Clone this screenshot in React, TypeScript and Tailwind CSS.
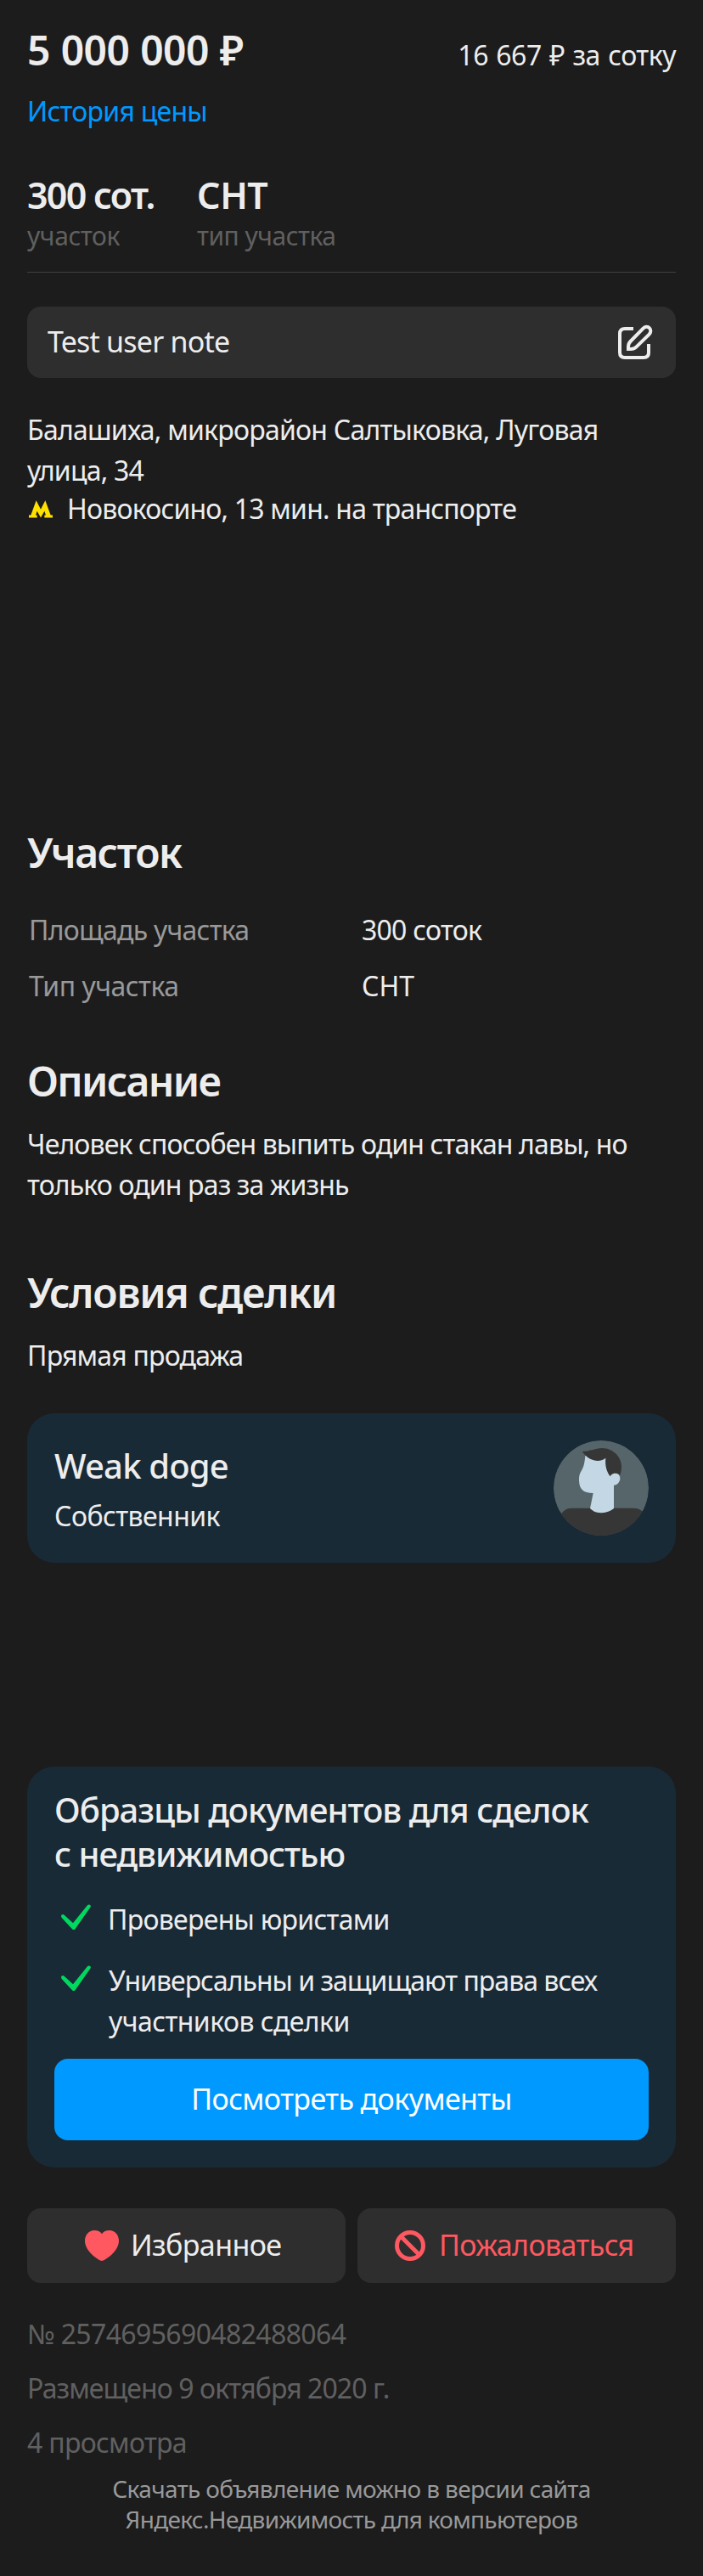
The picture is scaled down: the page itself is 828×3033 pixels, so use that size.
import React from "react";

function EditIcon() {
  return (
    <svg className="h-[42px] w-[42px]" viewBox="-1 -1 42 42" fill="none" stroke="#ededed" strokeWidth="4">
      <path d="M18 4H8C4 4 2 6 2 10V32C2 36 4 38 8 38H30C34 38 36 36 36 32V22" />
      <path d="M12 28V25.5C12 22.5 12.6 21 14.5 19L29.3 3.8C31.8 1.2 34.8 1.2 36.8 3.2C38.9 5.3 38.9 8.3 36.4 10.8L21.3 25.6C19.4 27.5 18 28 15 28Z" />
    </svg>
  );
}

function MetroIcon() {
  return (
    <svg className="h-[21px] w-[28px]" viewBox="42 28 84 62" fill="#ffe100">
      <path d="M68 28L84 60L100 28L119 80H126V89H97V80H102L97 66L84 89L71 66L66 80H71V89H42V80H49Z" />
    </svg>
  );
}

function CheckIcon() {
  return (
    <svg className="mt-[6px] ml-2 h-[30px] w-[35px] shrink-0" viewBox="36 36 105 90" fill="#00d95f">
      <path d="M36 79C36 73 43 70 47 74L78 103L129 40C134 34 143 39 140 46L86 123C83 127 78 127 75 124L38 84Z" />
    </svg>
  );
}

function HeartIcon() {
  return (
    <svg className="h-9 w-10" viewBox="0 0 40 36" fill="#ff5860">
      <path d="M20 36C23 36 40 25 40 12.500C40 5 35 0 29 0C25 0 21.500 1.600 20 4.200C18.500 1.600 15 0 11 0C5 0 0 5 0 12.500C0 25 17 36 20 36Z" />
    </svg>
  );
}

function BanIcon() {
  return (
    <svg className="h-9 w-9" viewBox="0 0 36 36" fill="none" stroke="#ff5860" strokeWidth="5">
      <circle cx="18" cy="18" r="15.5" />
      <path d="M7 7L29 29" />
    </svg>
  );
}

function Avatar() {
  return (
    <svg className="h-28 w-28 shrink-0 rounded-full" viewBox="36 48 336 336">
      <circle cx="204" cy="216" r="168" fill="#566569" />
      <path d="M58 316Q72 287 100 287H318Q340 287 354 302V390H58Z" fill="#363636" />
      <path
        d="M148 102C146 125 143 140 136 152C128 165 126 172 126 190C127 220 140 234 176 234L165 288Q180 304 204 304Q232 303 249 288V206C262 205 270 195 271 183C271 168 262 164 254 164L222 106Z"
        fill="#c3d8e4"
      />
      <path
        d="M137 87C160 88 180 76 208 75C245 76 276 105 276 140C276 152 274 162 270 171C262 160 243 162 236 175C224 158 217 138 220 110C205 124 165 128 137 87Z"
        fill="#363636"
      />
    </svg>
  );
}

export default function App() {
  return (
    <div className="h-[3033px] w-[828px] overflow-hidden whitespace-nowrap bg-[#1c1c1c] px-8 pt-[31px] font-['Noto_Sans',sans-serif] text-[32px] leading-[48px] text-[#ededed]">
      <div className="flex items-baseline justify-between">
        <div className="text-[48px] leading-[56px] font-semibold tracking-[-0.6px] [word-spacing:1px]">5 000 000 ₽</div>
        <div className="tracking-[-0.5px] [word-spacing:1.5px]">16 667 ₽ за сотку</div>
      </div>
      <div className="mt-[18px] tracking-[-0.74px] text-[#0099ff]">История цены</div>

      <div className="mt-[49px] flex border-b border-[#3f3f3f] pb-[22px]">
        <div className="w-[200px]">
          <div className="text-[43px] leading-[52px] font-semibold tracking-[-1.75px]">300 сот.</div>
          <div className="mt-[2px] text-[30px] leading-[40px] tracking-[-0.4px] text-[#606060]">участок</div>
        </div>
        <div>
          <div className="text-[43px] leading-[52px] font-semibold tracking-[-0.5px]">СНТ</div>
          <div className="mt-[2px] text-[30px] leading-[40px] tracking-[-0.5px] text-[#606060]">тип участка</div>
        </div>
      </div>

      <div className="mt-10 flex h-[84px] items-center justify-between rounded-2xl bg-[#2e2e2e] pr-[27px] pl-6">
        <span className="pb-[2px] text-[34px] tracking-[-0.8px]">Test user note</span>
        <EditIcon />
      </div>

      <div className="mt-[37px]">
        <div className="tracking-[-0.77px]">Балашиха, микрорайон Салтыковка, Луговая</div>
        <div className="tracking-[-0.8px]">улица, 34</div>
      </div>
      <div className="mt-px flex items-center pl-[2px] leading-[40px]">
        <MetroIcon />
        <span className="ml-[17px] tracking-[-0.8px]">Новокосино, 13 мин. на транспорте</span>
      </div>

      <h2 className="mt-[357px] text-[48px] leading-[56px] font-semibold tracking-[-1.5px]">Участок</h2>
      <div className="mt-[39px] grid grid-cols-[392px_1fr] gap-y-[18px] pl-[2px]">
        <div className="tracking-[-0.75px] text-[#999999]">Площадь участка</div>
        <div className="tracking-[-0.75px]">300 соток</div>
        <div className="tracking-[-0.5px] text-[#999999]">Тип участка</div>
        <div>СНТ</div>
      </div>

      <h2 className="mt-[60px] text-[48px] leading-[56px] font-semibold tracking-[-1.7px]">Описание</h2>
      <div className="mt-[22px]">
        <div className="tracking-[-0.86px]">Человек способен выпить один стакан лавы, но</div>
        <div className="tracking-[-0.86px]">только один раз за жизнь</div>
      </div>

      <h2 className="mt-[75px] text-[48px] leading-[56px] font-semibold tracking-[-1.23px]">Условия сделки</h2>
      <div className="mt-[22px] tracking-[-0.82px]">Прямая продажа</div>

      <div className="mt-11 flex h-44 justify-between rounded-[32px] bg-[#192a37] px-8 pt-8">
        <div className="pt-[6px]">
          <div className="text-[40px] font-medium tracking-[-0.85px]">Weak doge</div>
          <div className="mt-[11px] tracking-[-0.55px]">Собственник</div>
        </div>
        <Avatar />
      </div>

      <div className="mt-60 h-[472px] rounded-[32px] bg-[#192a37] px-8 pt-[25px]">
        <div className="text-[40px] leading-[52px] font-medium">
          <div className="tracking-[-0.96px]">Образцы документов для сделок</div>
          <div className="tracking-[-1.03px]">с недвижимостью</div>
        </div>
        <div className="mt-[27px] flex">
          <CheckIcon />
          <span className="ml-[20px] tracking-[-0.72px]">Проверены юристами</span>
        </div>
        <div className="mt-6 flex">
          <CheckIcon />
          <div className="ml-[21px]">
            <div className="tracking-[-0.99px]">Универсальны и защищают права всех</div>
            <div className="tracking-[-0.56px]">участников сделки</div>
          </div>
        </div>
        <button className="mt-5 flex h-24 w-full items-center justify-center rounded-2xl bg-[#0099ff] pb-[2px] text-[34px] tracking-[-0.6px] text-white">
          Посмотреть документы
        </button>
      </div>

      <div className="mt-12 grid grid-cols-2 gap-[14px] text-[34px]">
        <button className="flex h-[88px] items-center rounded-2xl bg-[#2e2e2e] pl-[68px]">
          <HeartIcon />
          <span className="ml-[14px] pb-[2px] tracking-[-0.6px]">Избранное</span>
        </button>
        <button className="flex h-[88px] items-center rounded-2xl bg-[#2e2e2e] pl-11 text-[#ff5860]">
          <BanIcon />
          <span className="ml-4 pb-[2px] tracking-[-0.6px]">Пожаловаться</span>
        </button>
      </div>

      <div className="mt-9 flex flex-col gap-4 text-[#606060]">
        <div className="tracking-[-0.64px]">№ 2574695690482488064</div>
        <div className="tracking-[-0.92px]">Размещено 9 октября 2020 г.</div>
        <div className="tracking-[-0.7px]">4 просмотра</div>
      </div>
      <div className="mt-3 text-center text-[28px] leading-[36px] text-[#999999]">
        <div className="tracking-[-0.65px]">Скачать объявление можно в версии сайта</div>
        <div className="tracking-[-0.7px]">Яндекс.Недвижимость для компьютеров</div>
      </div>
    </div>
  );
}
